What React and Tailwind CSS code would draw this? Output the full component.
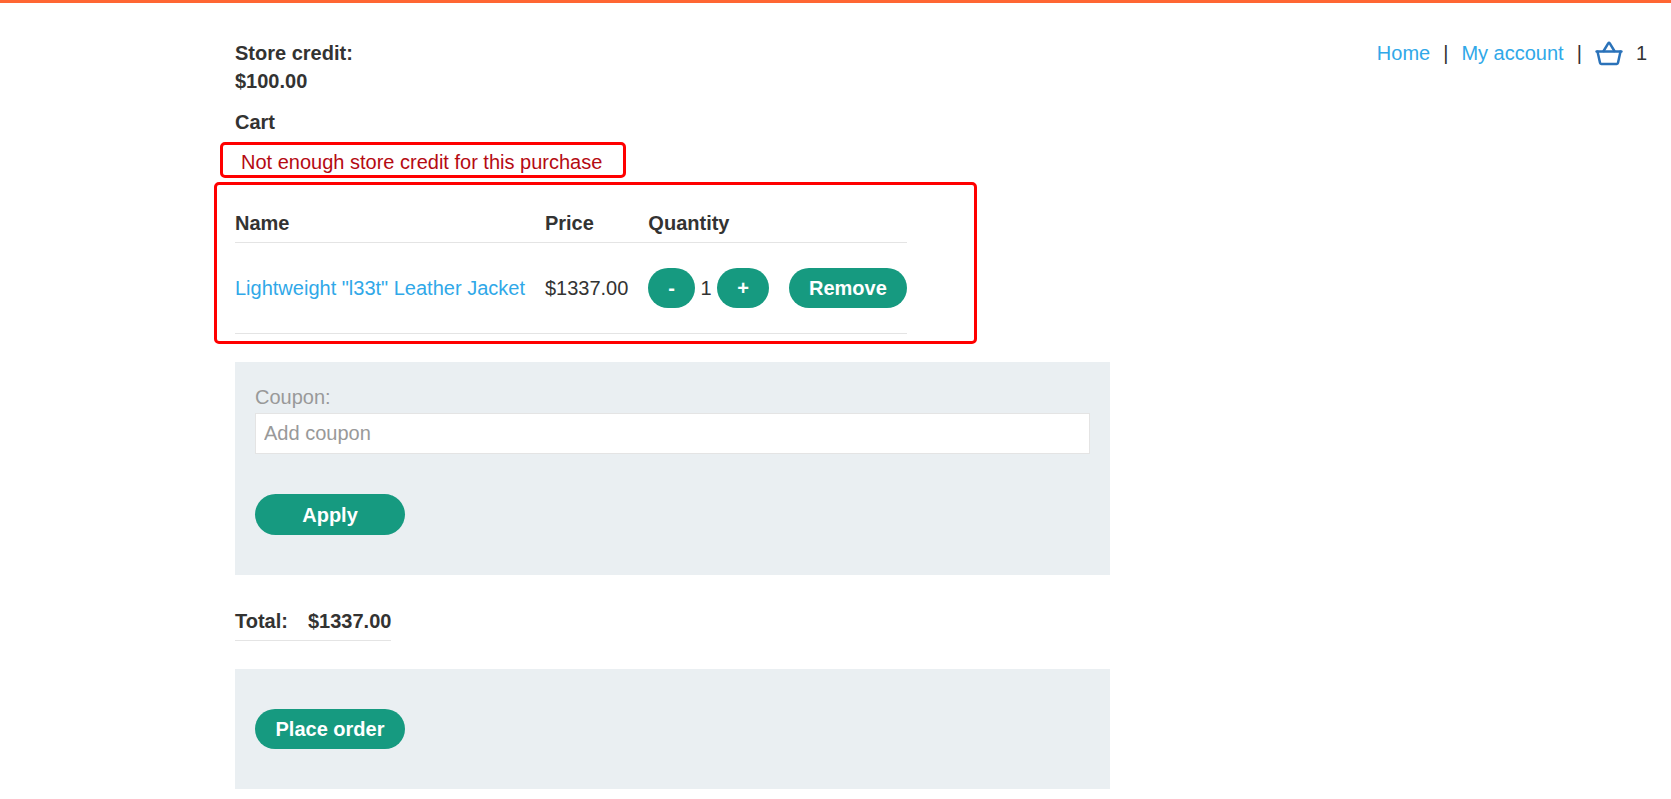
import React, { useState } from "react";

const pill =
  "h-10 cursor-pointer rounded-full bg-[#169a80] px-5 text-center font-bold text-white hover:bg-[#12806a]";

function BasketIcon() {
  return (
    <svg
      className="h-7 w-7"
      viewBox="0 0 28 28"
      fill="none"
      stroke="#2a72b9"
      strokeWidth="2.5"
      strokeLinejoin="round"
      strokeLinecap="round"
      aria-hidden="true"
    >
      <path d="M1.6 12.6H26.4" />
      <path d="M2.5 12.6L5 23.8Q5.2 24.9 6.3 24.9H21.7Q22.8 24.9 23 23.8L25.5 12.6" />
      <path d="M8.6 12L13.2 4.4Q14 3.2 14.8 4.4L19.4 12" />
    </svg>
  );
}

function Highlight({ className }) {
  return (
    <div
      aria-hidden="true"
      className={
        "pointer-events-none absolute rounded-[5px] border-3 border-[#ff0000] " +
        className
      }
    />
  );
}

export default function App() {
  const [coupon, setCoupon] = useState("");

  return (
    <div className="border-t-3 border-[#ff6633] bg-white font-['Liberation_Sans',Arial,sans-serif] text-[20px] leading-7 text-[#333332]">
      <div className="grid grid-cols-[1fr_minmax(0,1201px)_1fr] pt-9">
        <header className="col-start-2 col-end-4 flex justify-between pr-6">
          <div className="font-bold">
            <p>Store credit:</p>
            <p>$100.00</p>
          </div>
          <nav className="flex h-7 items-center gap-[13px]">
            <a href="#home" className="text-[#30a8e8]">Home</a>
            <span>|</span>
            <a href="#account" className="text-[#30a8e8]">My account</a>
            <span>|</span>
            <a href="#cart" aria-label="Basket"><BasketIcon /></a>
            <span>1</span>
          </nav>
        </header>

        <main className="col-start-2 max-w-[875px] pt-[13px] pb-2.5">
          <h1 className="font-bold">Cart</h1>

          <div className="relative mt-3 w-fit px-1.5 text-[#b50a12]">
            <p role="alert">Not enough store credit for this purchase</p>
            <Highlight className="-top-1.5 -right-[18px] -bottom-0.5 -left-[15px]" />
          </div>

          <div className="relative mt-[33px] w-fit">
            <table className="border-collapse text-left whitespace-nowrap">
              <thead>
                <tr className="border-b border-[#e4e4e4]">
                  <th className="pr-5 pb-[5px]">Name</th>
                  <th className="pr-5 pb-[5px]">Price</th>
                  <th className="pr-5 pb-[5px]">Quantity</th>
                  <th className="pb-[5px]"></th>
                </tr>
              </thead>
              <tbody>
                <tr className="border-b border-[#e4e4e4]">
                  <td className="py-[25px] pr-5">
                    <a href="#product" className="text-[#30a8e8]">
                      Lightweight "l33t" Leather Jacket
                    </a>
                  </td>
                  <td className="py-[25px] pr-5">$1337.00</td>
                  <td className="py-[25px] pr-5">
                    <button type="button" aria-label="Decrease quantity" className={pill}>-</button>
                    {" 1 "}
                    <button type="button" aria-label="Increase quantity" className={pill}>+</button>
                  </td>
                  <td className="py-[25px]">
                    <button type="button" className={pill + " block"}>Remove</button>
                  </td>
                </tr>
              </tbody>
            </table>
            <Highlight className="-top-[27px] -right-[70px] -bottom-2.5 -left-[21px]" />
          </div>

          <form
            className="mt-7 bg-[#eaeff2] px-5 pt-[21px] pb-10"
            onSubmit={(e) => e.preventDefault()}
          >
            <label htmlFor="coupon" className="block text-[#999999]">Coupon:</label>
            <input
              id="coupon"
              type="text"
              placeholder="Add coupon"
              value={coupon}
              onChange={(e) => setCoupon(e.target.value)}
              className="mt-0.5 block h-[41px] w-full border border-[#e4e4e4] bg-white px-2 placeholder:text-[#999999]"
            />
            <button type="submit" className={pill + " mt-10 block min-h-[41px] min-w-[150px]"}>
              Apply
            </button>
          </form>

          <table className="mt-8 border-collapse text-left">
            <tbody>
              <tr className="border-b border-[#e4e4e4]">
                <th scope="row" className="pr-5 pb-[5px]">Total:</th>
                <th className="pb-[5px]">$1337.00</th>
              </tr>
            </tbody>
          </table>

          <form
            className="mt-7 bg-[#eaeff2] px-5 py-10"
            onSubmit={(e) => e.preventDefault()}
          >
            <button type="submit" className={pill + " block min-w-[150px]"}>
              Place order
            </button>
          </form>
        </main>
      </div>
    </div>
  );
}
